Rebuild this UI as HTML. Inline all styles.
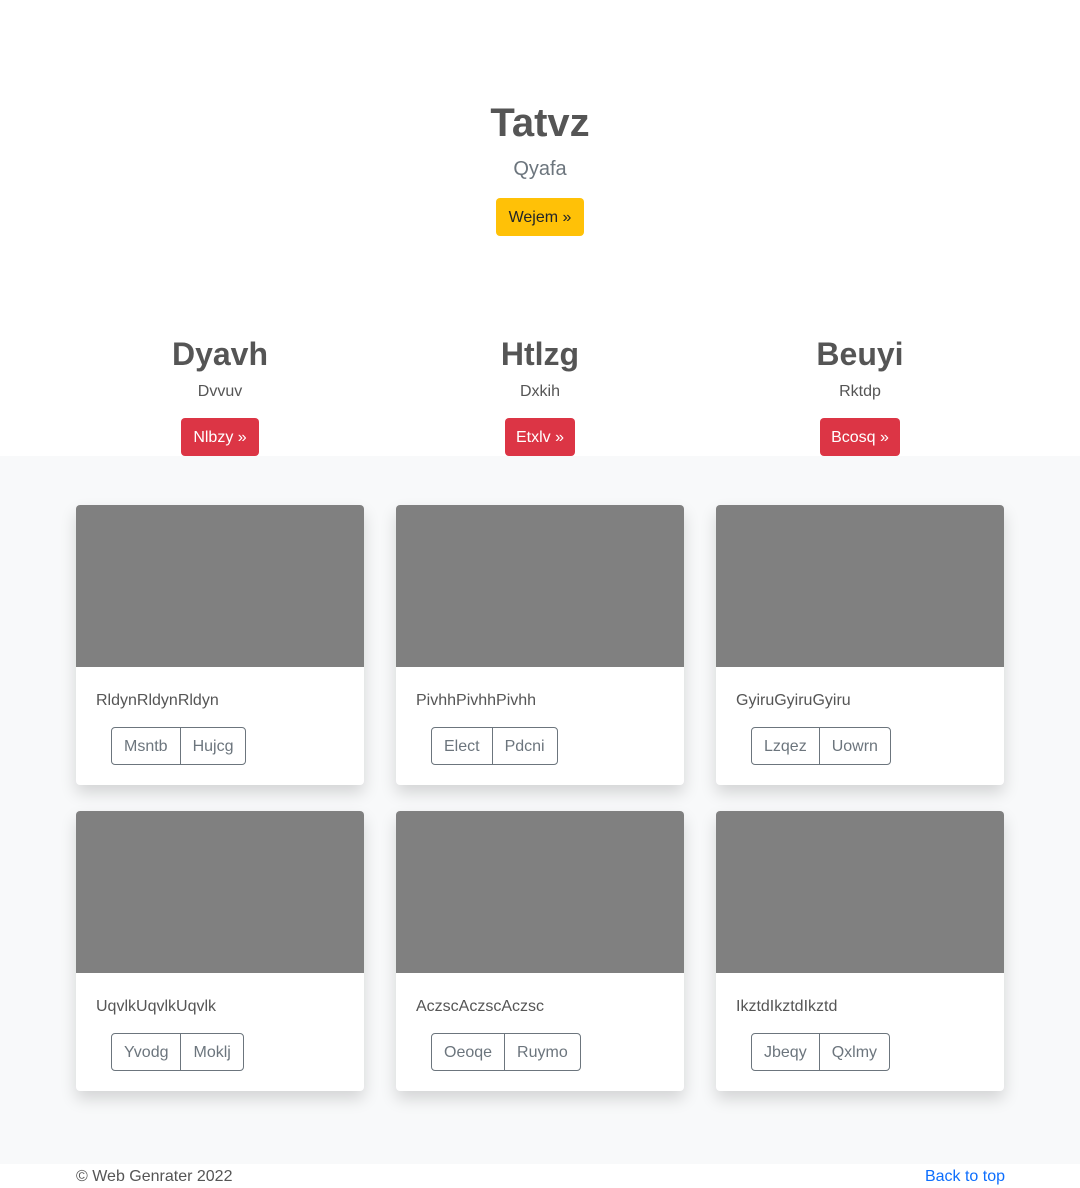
<!DOCTYPE html>
<html><head><meta charset="utf-8"><style>
*{box-sizing:border-box;margin:0;padding:0}
body{width:1080px;height:1188px;position:relative;background:#fff;font-family:"Liberation Sans",sans-serif;color:#555;overflow:hidden}
.c{position:absolute;text-align:center}
h1{font-size:40px;font-weight:bold;color:#555;line-height:48px}
h2{font-size:32px;font-weight:bold;color:#555;line-height:38px}
.btn{position:absolute;border-radius:4px;font-size:16px;line-height:40px;height:38px;text-align:center;overflow:hidden}
.y{background:#ffc107;color:#212529}
.r{background:#dc3545;color:#fff}
.band{position:absolute;left:0;top:456px;width:1080px;height:708px;background:#f8f9fa}
.card{position:absolute;width:288px;height:280px;background:#fff;border-radius:4px;box-shadow:0 8px 16px rgba(0,0,0,.15);overflow:hidden}
.img{height:162px;background:#808080}
.grp{position:absolute;left:35px;top:222px;height:38px;display:flex;border:1px solid #6c757d;border-radius:4px}
.grp span{display:block;padding:0 12px;line-height:38px;font-size:16px;color:#6c757d}
.grp span+span{border-left:1px solid #6c757d}
.ct{position:absolute;left:20px;top:187px;font-size:16px}
</style></head><body>
<div class="c" style="left:0;width:1080px;top:99px"><h1>Tatvz</h1></div>
<div class="c" style="left:0;width:1080px;top:158px;font-size:20px;color:#6c757d;font-weight:300">Qyafa</div>
<div class="btn y" style="left:496px;top:198px;width:88px">Wejem »</div>

<div class="c" style="left:60px;width:320px;top:335px"><h2>Dyavh</h2></div>
<div class="c" style="left:380px;width:320px;top:335px"><h2>Htlzg</h2></div>
<div class="c" style="left:700px;width:320px;top:335px"><h2>Beuyi</h2></div>
<div class="c" style="left:60px;width:320px;top:383px;font-size:16px">Dvvuv</div>
<div class="c" style="left:380px;width:320px;top:383px;font-size:16px">Dxkih</div>
<div class="c" style="left:700px;width:320px;top:383px;font-size:16px">Rktdp</div>
<div class="btn r" style="left:181px;top:418px;width:78px">Nlbzy »</div>
<div class="btn r" style="left:505px;top:418px;width:70px">Etxlv »</div>
<div class="btn r" style="left:820px;top:418px;width:80px">Bcosq »</div>

<div class="band"></div>

<div class="card" style="left:76px;top:505px"><div class="img"></div><div class="ct">RldynRldynRldyn</div><div class="grp"><span>Msntb</span><span>Hujcg</span></div></div>
<div class="card" style="left:396px;top:505px"><div class="img"></div><div class="ct">PivhhPivhhPivhh</div><div class="grp"><span>Elect</span><span>Pdcni</span></div></div>
<div class="card" style="left:716px;top:505px"><div class="img"></div><div class="ct">GyiruGyiruGyiru</div><div class="grp"><span>Lzqez</span><span>Uowrn</span></div></div>
<div class="card" style="left:76px;top:811px"><div class="img"></div><div class="ct">UqvlkUqvlkUqvlk</div><div class="grp"><span>Yvodg</span><span>Moklj</span></div></div>
<div class="card" style="left:396px;top:811px"><div class="img"></div><div class="ct">AczscAczscAczsc</div><div class="grp"><span>Oeoqe</span><span>Ruymo</span></div></div>
<div class="card" style="left:716px;top:811px"><div class="img"></div><div class="ct">IkztdIkztdIkztd</div><div class="grp"><span>Jbeqy</span><span>Qxlmy</span></div></div>

<div style="position:absolute;left:76px;top:1168px;font-size:16px;color:#555">© Web Genrater 2022</div>
<div style="position:absolute;right:75px;top:1168px;font-size:16px;color:#0d6efd">Back to top</div>
</body></html>
